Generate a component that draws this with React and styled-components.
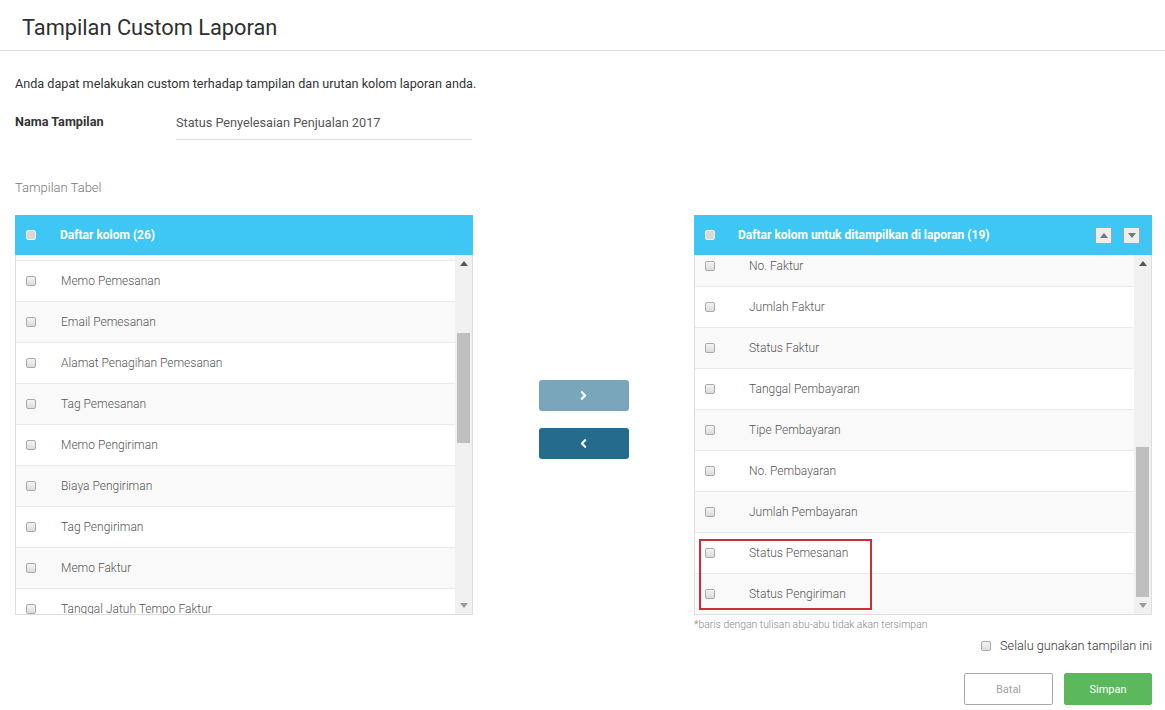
import React, { useLayoutEffect, useRef, useState } from "react";
import styled, { createGlobalStyle } from "styled-components";
import { ChevronRight, ChevronLeft } from "lucide-react";

const ROW_H = 41;

const leftItems = [
  "No. Pesanan",
  "Tanggal Pesanan",
  "Nama Pelanggan",
  "Gudang Pesanan",
  "Referensi Pesanan",
  "Memo Pemesanan",
  "Email Pemesanan",
  "Alamat Penagihan Pemesanan",
  "Tag Pemesanan",
  "Memo Pengiriman",
  "Biaya Pengiriman",
  "Tag Pengiriman",
  "Memo Faktur",
  "Tanggal Jatuh Tempo Faktur",
  "Tag Faktur",
  "Email Faktur",
  "Alamat Penagihan Faktur",
  "Memo Pembayaran",
  "Tag Pembayaran",
  "Metode Pembayaran",
  "Akun Pembayaran",
  "Sisa Tagihan",
  "Diskon Faktur",
  "Pajak Faktur",
  "Nama Sales",
  "Gudang Pengiriman",
];

const rightItems = [
  "No. Pemesanan",
  "Tanggal Pemesanan",
  "Pelanggan",
  "Produk",
  "Kuantitas",
  "Jumlah Pemesanan",
  "No. Pengiriman",
  "Tanggal Pengiriman",
  "Jumlah Pengiriman",
  "Tanggal Faktur",
  "No. Faktur",
  "Jumlah Faktur",
  "Status Faktur",
  "Tanggal Pembayaran",
  "Tipe Pembayaran",
  "No. Pembayaran",
  "Jumlah Pembayaran",
  "Status Pemesanan",
  "Status Pengiriman",
];

//
// --- Styled Components ---
const GlobalStyle = createGlobalStyle`
  html, body {
    margin: 0;
    background: #fff;
    font-family: Roboto, "Liberation Sans", Arial, sans-serif;
    color: #333;
  }
  * { box-sizing: border-box; }
`;

const Page = styled.div`
  width: 1165px;
  height: 710px;
  overflow: hidden;
`;

const TopBar = styled.div`
  height: 51px;
  padding: 4px 22px 0;
  display: flex;
  align-items: center;
  border-bottom: 1px solid #e3e3e3;
`;

const Title = styled.h1`
  margin: 0;
  font-size: 21.8px;
  font-weight: 400;
  color: #2f2f2f;
`;

const Content = styled.div`
  padding: 0 13px 0 15px;
`;

const Intro = styled.p`
  margin: 24px 0 0;
  font-size: 12.65px;
  line-height: 18px;
  color: #333;
`;

const NameRow = styled.div`
  display: flex;
  align-items: flex-start;
  margin-top: 20px;
`;

const NameLabel = styled.div`
  width: 161px;
  font-size: 12.65px;
  line-height: 18px;
  font-weight: 700;
  color: #333;
`;

const NameInput = styled.div`
  width: 296px;
  height: 27px;
  padding-top: 1px;
  font-size: 12.7px;
  line-height: 18px;
  color: #555;
  border-bottom: 1px solid #dcdcdc;
`;

const SectionLabel = styled.div`
  margin-top: 39px;
  font-size: 13px;
  line-height: 18px;
  font-weight: 300;
  color: #777;
`;

const Transfer = styled.div`
  display: grid;
  grid-template-columns: 458px 1fr 458px;
  margin-top: 18px;
`;

const Panel = styled.div`
  position: relative;
  display: flex;
  flex-direction: column;
`;

const PanelHead = styled.div`
  height: 40px;
  background: #3ec7f4;
  display: flex;
  align-items: center;
  padding: 0 12px 0 11px;
  color: #fff;
  font-size: 12px;
  font-weight: 700;
`;

const HeadTitle = styled.span`
  margin-left: ${p => p.$indent}px;
  flex: 1;
`;

const Box = styled.span`
  display: inline-block;
  flex: none;
  width: 10px;
  height: 10px;
  border-radius: 2px;
  border: 1px solid ${p => (p.$light ? "#f2f2f2" : "#a9a9a9")};
  background: ${p => (p.$light ? "#d9d9d9" : "linear-gradient(#f4f4f4, #dcdcdc)")};
`;

const SortButtons = styled.div`
  display: flex;
  gap: 11px;
`;

const SortButton = styled.span`
  width: 17px;
  height: 17px;
  border: 1px solid #9aa7ad;
  background: #ededed;
  display: flex;
  align-items: center;
  justify-content: center;
`;

const ListBody = styled.div`
  height: 360px;
  display: flex;
  border: 1px solid #dedede;
  border-top: none;
`;

const Viewport = styled.div`
  flex: 1;
  overflow: hidden;
`;

const Row = styled.div`
  height: ${ROW_H}px;
  display: flex;
  align-items: center;
  padding-left: 10px;
  border-bottom: 1px solid #ebebeb;
  background: #fff;
  font-size: 12px;
  font-weight: 300;
  color: #555;

  &:nth-child(odd) {
    background: #f9f9f9;
  }
`;

const RowText = styled.span`
  margin-left: ${p => p.$indent}px;
`;

const Track = styled.div`
  width: 17px;
  background: #f0f0f0;
  display: flex;
  flex-direction: column;
  align-items: center;
`;

const TrackArrow = styled.div`
  height: 17px;
  width: 100%;
  display: flex;
  align-items: center;
  justify-content: center;
`;

const Rail = styled.div`
  flex: 1;
  width: 100%;
  display: flex;
  flex-direction: column;
  align-items: center;
`;

const Thumb = styled.div`
  width: 13px;
  background: #bfbfbf;
`;

const Middle = styled.div`
  display: flex;
  flex-direction: column;
  align-items: center;
  padding-top: 165px;
  gap: 17px;
`;

const MoveButton = styled.button`
  width: 90px;
  height: 31px;
  border: none;
  border-radius: 3px;
  background: ${p => (p.$muted ? "#79a6bb" : "#246b8d")};
  color: #fff;
  display: flex;
  align-items: center;
  justify-content: center;
  padding: 0;
`;

const Highlight = styled.div`
  position: absolute;
  left: 5px;
  top: 324px;
  width: 173px;
  height: 71px;
  border: 2px solid #c8303b;
  pointer-events: none;
`;

const Footer = styled.div`
  display: flex;
  flex-direction: column;
  align-items: flex-end;
`;

const Note = styled.div`
  align-self: stretch;
  margin: 4px 0 0 679px;
  font-size: 10.4px;
  line-height: 12px;
  font-weight: 300;
  color: #888;
`;

const AlwaysRow = styled.label`
  margin-top: 6px;
  display: flex;
  align-items: center;
  gap: 9px;
  font-size: 12.7px;
  line-height: 18px;
  font-weight: 300;
  color: #333;
`;

const Actions = styled.div`
  margin-top: 18px;
  display: flex;
  gap: 11px;
`;

const ActionButton = styled.button`
  width: ${p => (p.$primary ? 88 : 89)}px;
  height: 32px;
  border-radius: 2px;
  font-family: inherit;
  font-size: 11px;
  font-weight: 400;
  border: 1px solid ${p => (p.$primary ? "#5cb85c" : "#a8a8a8")};
  background: ${p => (p.$primary ? "#5cb85c" : "#fff")};
  color: ${p => (p.$primary ? "#fff" : "#a2a2a2")};
`;

const Tri = ({ down, color = "#555" }) => (
  <svg width="8" height="5" viewBox="0 0 8 5">
    <path d={down ? "M0 0 L8 0 L4 5 Z" : "M0 5 L8 5 L4 0 Z"} fill={color} />
  </svg>
);

//
// --- Column List Component ---
const ColumnList = ({ items, scrollTop, indent }) => {
  const ref = useRef(null);
  const [view, setView] = useState({ top: scrollTop, height: 360 });

  useLayoutEffect(() => {
    if (ref.current) {
      ref.current.scrollTop = scrollTop;
      setView({ top: ref.current.scrollTop, height: ref.current.clientHeight });
    }
  }, [scrollTop]);

  const total = items.length * ROW_H;
  const rail = 360 - 34;
  const thumbH = Math.round((view.height / total) * rail);
  const thumbTop = Math.round((view.top / total) * rail);

  return (
    <ListBody>
      <Viewport ref={ref}>
        {items.map(item => (
          <Row key={item}>
            <Box />
            <RowText $indent={indent}>{item}</RowText>
          </Row>
        ))}
      </Viewport>
      <Track>
        <TrackArrow>
          <Tri />
        </TrackArrow>
        <Rail>
          <Thumb style={{ marginTop: thumbTop, height: thumbH }} />
        </Rail>
        <TrackArrow>
          <Tri down color="#9a9a9a" />
        </TrackArrow>
      </Track>
    </ListBody>
  );
};

//
// --- App ---
const App = () => (
  <Page>
    <GlobalStyle />
    <TopBar>
      <Title>Tampilan Custom Laporan</Title>
    </TopBar>
    <Content>
      <Intro>Anda dapat melakukan custom terhadap tampilan dan urutan kolom laporan anda.</Intro>
      <NameRow>
        <NameLabel>Nama Tampilan</NameLabel>
        <NameInput>Status Penyelesaian Penjualan 2017</NameInput>
      </NameRow>
      <SectionLabel>Tampilan Tabel</SectionLabel>
      <Transfer>
        <Panel>
          <PanelHead>
            <Box $light />
            <HeadTitle $indent={24}>Daftar kolom (26)</HeadTitle>
          </PanelHead>
          <ColumnList items={leftItems} scrollTop={4 * ROW_H + 35} indent={25} />
        </Panel>
        <Middle>
          <MoveButton $muted>
            <ChevronRight size={13} strokeWidth={4} />
          </MoveButton>
          <MoveButton>
            <ChevronLeft size={13} strokeWidth={4} />
          </MoveButton>
        </Middle>
        <Panel>
          <PanelHead>
            <Box $light />
            <HeadTitle $indent={23}>Daftar kolom untuk ditampilkan di laporan (19)</HeadTitle>
            <SortButtons>
              <SortButton>
                <Tri color="#777" />
              </SortButton>
              <SortButton>
                <Tri down color="#777" />
              </SortButton>
            </SortButtons>
          </PanelHead>
          <ColumnList items={rightItems} scrollTop={rightItems.length * ROW_H - 360} indent={34} />
          <Highlight />
        </Panel>
      </Transfer>
      <Footer>
        <Note>*baris dengan tulisan abu-abu tidak akan tersimpan</Note>
        <AlwaysRow>
          <Box />
          Selalu gunakan tampilan ini
        </AlwaysRow>
        <Actions>
          <ActionButton>Batal</ActionButton>
          <ActionButton $primary>Simpan</ActionButton>
        </Actions>
      </Footer>
    </Content>
  </Page>
);

export default App;
